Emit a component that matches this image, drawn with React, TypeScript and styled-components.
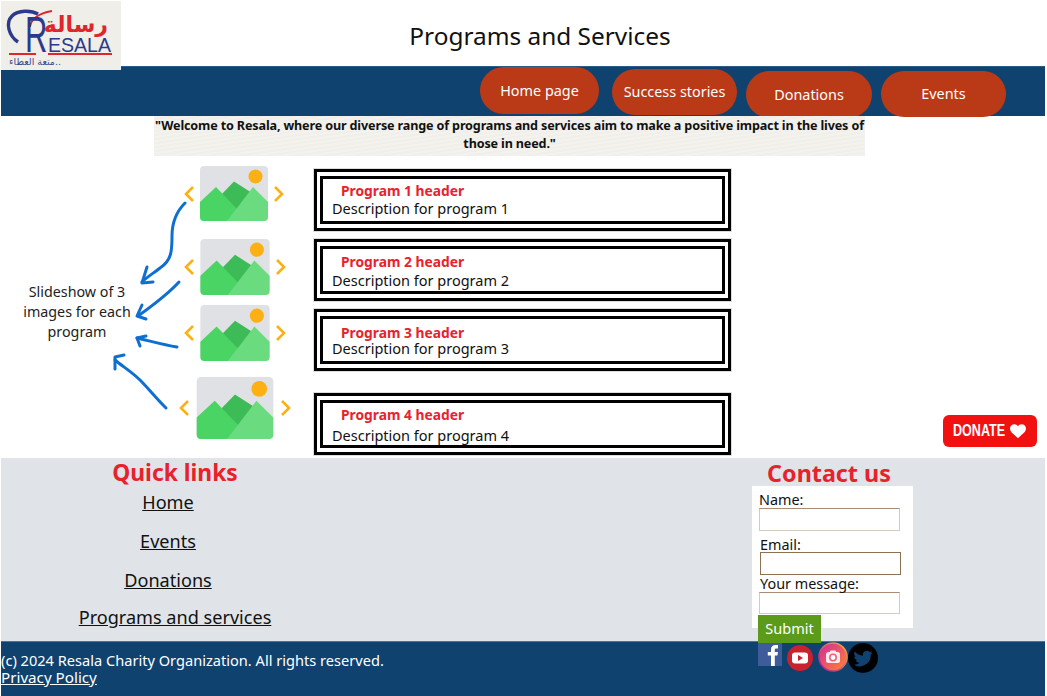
import * as React from 'react';
import styled, { createGlobalStyle } from 'styled-components';

const GlobalStyle = createGlobalStyle`
  html, body { margin: 0; padding: 0; background: #fff; }
  body { font-family: "Noto Sans", "Open Sans", sans-serif; color: #111; }
`;

const programs = [
  { n: 1, top: 13, titleTop: 5, descGap: 3 },
  { n: 2, top: 8, titleTop: 6, descGap: 4 },
  { n: 3, top: 8, titleTop: 7, descGap: 1 },
  { n: 4, top: 22, titleTop: 5, descGap: 6 },
];

const slides = [
  { left: 5, top: 10, w: 68, h: 55, gap: 5 },
  { left: 5, top: 18, w: 70, h: 56, gap: 5 },
  { left: 5, top: 10, w: 70, h: 56, gap: 5 },
  { left: 0, top: 16, w: 78, h: 62, gap: 6 },
];

const navItems = [
  { label: 'Home page', w: 119, h: 47, top: 1, gap: 0, lift: 0 },
  { label: 'Success stories', w: 125, h: 46, top: 3, gap: 13, lift: 2 },
  { label: 'Donations', w: 126, h: 47, top: 5, gap: 9, lift: 1 },
  { label: 'Events', w: 125, h: 46, top: 5, gap: 9, lift: 2 },
];

const ImageGlyph: React.FC<{ w: number; h: number }> = ({ w, h }) => (
  <svg width={w} height={h} viewBox="0 0 68 55">
    <rect width="68" height="55" rx="4" fill="#e0e1e5" />
    <circle cx="55.5" cy="10.5" r="7" fill="#fdb014" />
    <path d="M20 30 L34 15.5 L52 27 L37 50 Z" fill="#3dbb57" />
    <path d="M0 36 L16 21 L40 46 L27 55 L4 55 Q0 55 0 51 Z" fill="#49d463" />
    <path d="M27 55 L53 21 L68 36 L68 51 Q68 55 64 55 Z" fill="#6bdb7f" />
  </svg>
);

const Chevron: React.FC<{ dir: 'left' | 'right' }> = ({ dir }) => (
  <svg width="12" height="18" viewBox="0 0 12 18">
    <polyline
      points={dir === 'left' ? '10,2 3,9 10,16' : '2,2 9,9 2,16'}
      fill="none"
      stroke="#fdb014"
      strokeWidth="2.6"
    />
  </svg>
);

const HandArrows = () => (
  <ArrowLayer width="200" height="342" viewBox="0 116 200 342">
    <g fill="none" stroke="#0f6fd0" strokeWidth="3" strokeLinecap="round" strokeLinejoin="round">
      <path d="M185 203 C176 212 172 222 172 236 C172 250 172 260 160 268 C154 273 148 276 142 282" />
      <path d="M147 267 L142 283 L153 282" />
      <path d="M179 282 C168 294 152 306 138 316" />
      <path d="M142 305 L137 316 L146 319" />
      <path d="M177 347 C164 345 150 341 137 338" />
      <path d="M146 336 L137 338 L140 346" />
      <path d="M166 408 C156 398 148 388 140 380 C132 372 122 366 115 360" />
      <path d="M124 355 L115 357 L115 369" />
    </g>
  </ArrowLayer>
);

const Logo = () => (
  <LogoBox>
    <svg width="120" height="69" viewBox="0 0 120 69">
      <path d="M17 41 C8 35 4 22 11 15 C17 9 30 9 37 13" fill="none" stroke="#2b3a8c" strokeWidth="3.4" />
      <path d="M29 26 C30 17 40 12 51 10" fill="none" stroke="#e1252d" strokeWidth="1.8" />
      <text transform="translate(24 51) scale(.62 1)" fontFamily="Liberation Sans" fontSize="50" fill="#2b3a8c">R</text>
      <text x="47" y="50.5" fontFamily="Liberation Sans" fontSize="21" fill="#2b3a8c" textLength="63" lengthAdjust="spacingAndGlyphs">ESALA</text>
      <text x="107" y="31" textAnchor="end" fontFamily="DejaVu Sans" fontWeight="700" fontSize="22" fill="#e1252d">رسالة</text>
      <rect x="8" y="52" width="27" height="2" fill="#e1252d" />
      <rect x="47" y="52" width="64" height="2" fill="#e1252d" />
      <text x="60" y="64" textAnchor="end" fontFamily="DejaVu Sans" fontSize="9.5" fill="#3a4a8c">متعة العطاء..</text>
    </svg>
  </LogoBox>
);

export default function App() {
  return (
    <Page>
      <GlobalStyle />
      <Header>
        <Logo />
        <Title>Programs and Services</Title>
      </Header>
      <Nav>
        {navItems.map(item => (
          <NavPill key={item.label} $w={item.w} $h={item.h} $top={item.top} $gap={item.gap} $lift={item.lift}>
            {item.label}
          </NavPill>
        ))}
      </Nav>
      <Main>
        <Quote>
          "Welcome to Resala, where our diverse range of programs and services aim to make a positive impact in the
          lives of those in need."
        </Quote>
        <Columns>
          <Note>Slideshow of 3 images for each program</Note>
          <SlideColumn>
            {slides.map((s, i) => (
              <Slide key={i} $left={s.left} $top={s.top} $gap={s.gap}>
                <Chevron dir="left" />
                <ImageGlyph w={s.w} h={s.h} />
                <Chevron dir="right" />
              </Slide>
            ))}
          </SlideColumn>
          <CardColumn>
            {programs.map(p => (
              <Card key={p.n} $top={p.top}>
                <CardInner $top={p.titleTop}>
                  <CardTitle>Program {p.n} header</CardTitle>
                  <CardText $top={p.descGap}>Description for program {p.n}</CardText>
                </CardInner>
              </Card>
            ))}
          </CardColumn>
          <DonateSlot>
            <DonateButton>
              <DonateLabel>DONATE</DonateLabel>
              <svg width="16" height="15" viewBox="0 0 24 22">
                <path
                  d="M12 21 C4 14 0 11 0 6.5 C0 2.5 3 0 6.5 0 C9 0 11 1.3 12 3.5 C13 1.3 15 0 17.5 0 C21 0 24 2.5 24 6.5 C24 11 20 14 12 21 Z"
                  fill="#fff"
                />
              </svg>
            </DonateButton>
          </DonateSlot>
        </Columns>
        <HandArrows />
      </Main>
      <Footer>
        <QuickLinks>
          <FooterHeading>Quick links</FooterHeading>
          <LinkItem $top={5} $shift={-14}>Home</LinkItem>
          <LinkItem $top={17} $shift={-14}>Events</LinkItem>
          <LinkItem $top={17} $shift={-14}>Donations</LinkItem>
          <LinkItem $top={15} $shift={0}>Programs and services</LinkItem>
        </QuickLinks>
        <Contact>
          <FooterHeading>Contact us</FooterHeading>
          <FormBox>
            <FieldLabel>Name:</FieldLabel>
            <FieldInput />
            <FieldLabel $left={1} $top={5}>Email:</FieldLabel>
            <FieldInput $left={1} $top={-1} $dark />
            <FieldLabel $left={1} $top={0}>Your message:</FieldLabel>
            <FieldInput $h={22} />
            <SubmitButton>Submit</SubmitButton>
          </FormBox>
        </Contact>
      </Footer>
      <BottomBar>
        <Legal>
          <div>(c) 2024 Resala Charity Organization. All rights reserved.</div>
          <PrivacyLink>Privacy Policy</PrivacyLink>
        </Legal>
        <Socials>
          <SocialIcon $left={0} $top={0}>
            <svg width="24" height="24" viewBox="0 0 24 24">
              <rect width="24" height="24" fill="#3f5c9a" />
              <path d="M13 24 V13.5 H9.8 V10 H13 V7.5 C13 4.5 14.8 3 17.2 3 H20 V6.5 H18.2 C17 6.5 16.8 7.1 16.8 8 V10 H20 L19.4 13.5 H16.8 V24 Z" fill="#fff" />
            </svg>
          </SocialIcon>
          <SocialIcon $left={5} $top={3}>
            <svg width="26" height="26" viewBox="0 0 26 26">
              <circle cx="13" cy="13" r="13" fill="#c9212e" />
              <rect x="5" y="7.5" width="16" height="11" rx="3" fill="#fff" />
              <path d="M11 10 L16 13 L11 16 Z" fill="#c9212e" />
            </svg>
          </SocialIcon>
          <SocialIcon $left={5} $top={0}>
            <svg width="30" height="30" viewBox="0 0 30 30">
              <defs>
                <linearGradient id="igFill" x1="0" y1="0" x2="1" y2="1">
                  <stop offset="0" stopColor="#d6249f" />
                  <stop offset="1" stopColor="#fd8a2c" />
                </linearGradient>
                <linearGradient id="igRing" x1="1" y1="0" x2="0" y2="1">
                  <stop offset="0" stopColor="#f5b13c" />
                  <stop offset="1" stopColor="#a0189f" />
                </linearGradient>
              </defs>
              <circle cx="15" cy="15" r="14" fill="url(#igFill)" stroke="url(#igRing)" strokeWidth="1.6" />
              <rect x="8" y="10" width="14" height="11" rx="2.5" fill="#ffe9ee" />
              <rect x="12" y="8.5" width="6" height="2.5" rx="1" fill="#ffe9ee" />
              <circle cx="15" cy="15.5" r="3.2" fill="#fff" stroke="#f0627a" strokeWidth="1.6" />
            </svg>
          </SocialIcon>
          <SocialIcon $left={0} $top={1}>
            <svg width="30" height="30" viewBox="0 0 30 30">
              <circle cx="15" cy="15" r="15" fill="#000" />
              <path
                transform="translate(5.5 6) scale(.8)"
                d="M24 4.6a10 10 0 0 1-2.8.8 5 5 0 0 0 2.2-2.7 10 10 0 0 1-3.1 1.2 4.9 4.9 0 0 0-8.4 4.5A14 14 0 0 1 1.7 3.2a4.9 4.9 0 0 0 1.5 6.6 5 5 0 0 1-2.2-.6 4.9 4.9 0 0 0 3.9 4.8 5 5 0 0 1-2.2.1 4.9 4.9 0 0 0 4.6 3.4A10 10 0 0 1 0 19.5a14 14 0 0 0 21.5-12.4A10 10 0 0 0 24 4.6z"
                fill="#0f4270"
              />
            </svg>
          </SocialIcon>
        </Socials>
      </BottomBar>
    </Page>
  );
}

const Page = styled.div`
  width: 1044px;
  height: 696px;
  margin-left: 1px;
  overflow: hidden;
  background: #fff;
`;

const Header = styled.header`
  position: relative;
  height: 66px;
  display: flex;
  align-items: center;
  justify-content: center;
  padding: 5px 0 0 34px;
  box-sizing: border-box;
`;

const LogoBox = styled.div`
  position: absolute;
  left: 0;
  top: 1px;
  width: 120px;
  height: 69px;
  background: #f0eee9;
  z-index: 2;
`;

const Title = styled.h1`
  margin: 0;
  font-size: 24.4px;
  font-weight: 400;
  color: #111;
`;

const Nav = styled.nav`
  height: 50px;
  box-sizing: border-box;
  background: #10426f;
  border-top: 1px solid #2d5a85;
  display: flex;
  padding-left: 479px;
`;

const NavPill = styled.div<{ $w: number; $h: number; $top: number; $gap: number; $lift: number }>`
  width: ${p => p.$w}px;
  height: ${p => p.$h}px;
  margin: ${p => p.$top - 1}px 0 0 ${p => p.$gap}px;
  padding-bottom: ${p => p.$lift}px;
  box-sizing: border-box;
  flex: none;
  border-radius: 24px;
  background: #ba3a17;
  color: #fff;
  font-size: 14.4px;
  display: flex;
  align-items: center;
  justify-content: center;
  position: relative;
`;

const Main = styled.main`
  position: relative;
  height: 342px;
`;

const Quote = styled.p`
  margin: 0 0 0 153px;
  width: 711px;
  height: 40px;
  box-sizing: border-box;
  padding-top: 1px;
  text-align: center;
  font-size: 12.6px;
  letter-spacing: -0.15px;
  font-weight: 700;
  line-height: 18px;
  color: #111;
  background: repeating-linear-gradient(172deg, #f3f2ee 0 2px, #f0efea 2px 4px);
`;

const Columns = styled.div`
  display: grid;
  grid-template-columns: 180px 133px 417px 1fr;
  height: 302px;
`;

const Note = styled.div`
  width: 120px;
  margin: 126px 0 0 16px;
  text-align: center;
  font-size: 14.3px;
  line-height: 20px;
  color: #222;
`;

const SlideColumn = styled.div`
  display: flex;
  flex-direction: column;
`;

const Slide = styled.div<{ $left: number; $top: number; $gap: number }>`
  display: flex;
  align-items: center;
  gap: ${p => p.$gap}px;
  margin: ${p => p.$top}px 0 0 ${p => p.$left - 3}px;
`;

const CardColumn = styled.div`
  display: flex;
  flex-direction: column;
`;

const Card = styled.div<{ $top: number }>`
  height: 62px;
  box-sizing: border-box;
  margin-top: ${p => p.$top}px;
  border: 3px solid #000;
  outline: 1px solid #ddd;
  padding: 4px 3px;
  flex: none;
`;

const CardInner = styled.div<{ $top: number }>`
  height: 100%;
  box-sizing: border-box;
  border: 3px solid #000;
  padding: ${p => p.$top}px 0 0 9px;
`;

const CardTitle = styled.div`
  margin-left: 9px;
  font-size: 13.8px;
  font-weight: 700;
  line-height: 14px;
  color: #e8222c;
`;

const CardText = styled.div<{ $top: number }>`
  margin-top: ${p => p.$top}px;
  font-size: 14.5px;
  line-height: 14px;
  color: #111;
`;

const DonateSlot = styled.div`
  display: flex;
  justify-content: flex-end;
  align-items: flex-end;
  padding: 0 8px 11px 0;
`;

const DonateButton = styled.div`
  width: 94px;
  height: 32px;
  border-radius: 6px;
  background: #f21111;
  color: #fff;
  display: flex;
  align-items: center;
  padding-left: 10px;
  box-sizing: border-box;
  gap: 5px;
`;

const DonateLabel = styled.span`
  display: inline-block;
  width: 52px;
  font-family: "Liberation Sans", sans-serif;
  font-weight: 700;
  font-size: 17px;
  white-space: nowrap;
  transform: scaleX(.74);
  transform-origin: left center;
`;

const ArrowLayer = styled.svg`
  position: absolute;
  left: -1px;
  top: 0;
  pointer-events: none;
`;

const Footer = styled.footer`
  height: 183px;
  background: #e0e4e8;
  display: grid;
  grid-template-columns: 348px 1fr;
`;

const QuickLinks = styled.div`
  display: flex;
  flex-direction: column;
  align-items: center;
`;

const FooterHeading = styled.h2`
  margin: 0;
  height: 28px;
  box-sizing: border-box;
  padding-top: 1px;
  font-size: 22.8px;
  font-weight: 700;
  line-height: 28px;
  color: #e8222c;
  text-align: center;
`;

const LinkItem = styled.a<{ $top: number; $shift: number }>`
  margin: ${p => p.$top}px 0 0 ${p => p.$shift}px;
  font-size: 18.1px;
  line-height: 22px;
  color: #111;
  text-decoration: underline;
`;

const Contact = styled.div`
  width: 161px;
  margin-left: 403px;
  h2 { margin-left: -10px; margin-right: -3px; font-size: 23.3px; }
`;

const FormBox = styled.form`
  position: relative;
  height: 142px;
  box-sizing: border-box;
  background: #fff;
  padding: 5px 0 0 7px;
`;

const FieldLabel = styled.div<{ $left?: number; $top?: number }>`
  margin: ${p => p.$top ?? 0}px 0 0 ${p => p.$left ?? 0}px;
  font-size: 14.4px;
  line-height: 17px;
  color: #111;
`;

const FieldInput = styled.div<{ $left?: number; $top?: number; $dark?: boolean; $h?: number }>`
  width: 141px;
  height: ${p => p.$h ?? 23}px;
  box-sizing: border-box;
  margin: ${p => p.$top ?? 0}px 0 0 ${p => p.$left ?? 0}px;
  background: #fff;
  border: 1px solid ${p => (p.$dark ? '#8e7052' : '#d6c9bd')};
  border-top-color: ${p => (p.$dark ? '#8e7052' : '#a78d73')};
`;

const SubmitButton = styled.div`
  position: absolute;
  left: 6px;
  top: 129px;
  width: 63px;
  height: 28px;
  padding-bottom: 2px;
  box-sizing: border-box;
  background: #5c9a1a;
  color: #fff;
  font-size: 14.5px;
  display: flex;
  align-items: center;
  justify-content: center;
  z-index: 2;
`;

const BottomBar = styled.div`
  height: 55px;
  box-sizing: border-box;
  border-top: 1px solid #4b7399;
  background: #10426f;
  display: grid;
  grid-template-columns: 757px auto;
  color: #fff;
`;

const Legal = styled.div`
  font-size: 14.6px;
  line-height: 17px;
  padding-top: 10px;
`;

const PrivacyLink = styled.a`
  font-size: 15.2px;
  text-decoration: underline;
`;

const Socials = styled.div`
  display: flex;
  align-items: flex-start;
  height: 31px;
  position: relative;
  z-index: 1;
`;

const SocialIcon = styled.span<{ $left: number; $top: number }>`
  display: block;
  flex: none;
  line-height: 0;
  margin: ${p => p.$top}px 0 0 ${p => p.$left}px;
`;
